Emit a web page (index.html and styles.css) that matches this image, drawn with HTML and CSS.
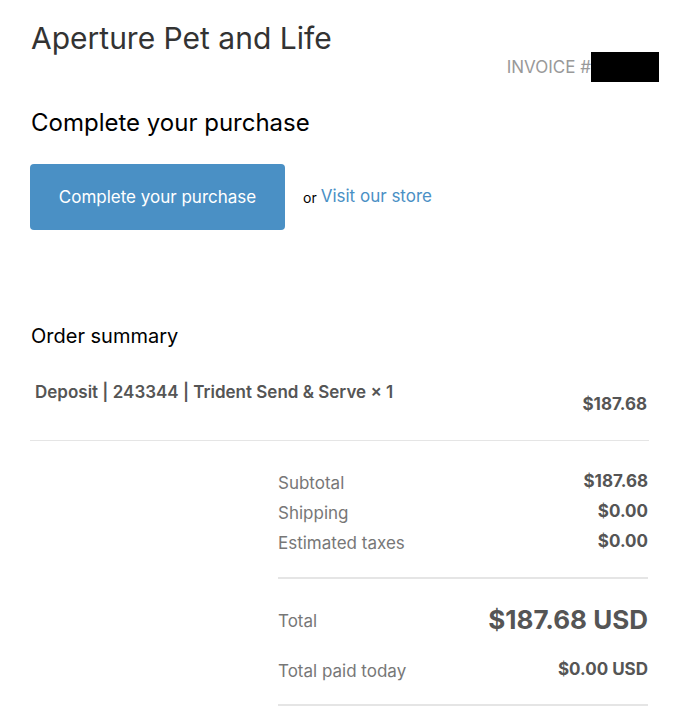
FILE: index.html
```html
<!DOCTYPE html>
<html>
<head>
<meta charset="utf-8">
<link rel="stylesheet" href="styles.css">
</head>
<body>
<div class="page">
  <header class="header">
    <h1 class="shop-name">Aperture Pet and Life</h1>
    <div class="order-number">INVOICE #<span class="redact"></span></div>
  </header>

  <section class="purchase">
    <h2 class="title">Complete your purchase</h2>
    <div class="actions">
      <a class="button">Complete your purchase</a>
      <span class="or">or</span>
      <a class="link">Visit our store</a>
    </div>
  </section>

  <section class="summary">
    <h3 class="summary-title">Order summary</h3>
    <div class="line-item">
      <span class="item-name">Deposit | 243344 | Trident Send &amp; Serve × 1</span>
      <span class="item-price">$187.68</span>
    </div>
    <div class="totals">
      <div class="sub-rows">
        <div class="row"><span class="label">Subtotal</span><span class="value">$187.68</span></div>
        <div class="row"><span class="label">Shipping</span><span class="value">$0.00</span></div>
        <div class="row"><span class="label">Estimated taxes</span><span class="value">$0.00</span></div>
      </div>
      <div class="grand-rows">
        <div class="row total"><span class="label">Total</span><span class="value big">$187.68 USD</span></div>
        <div class="row paid"><span class="label">Total paid today</span><span class="value">$0.00 USD</span></div>
      </div>
    </div>
  </section>
</div>
</body>
</html>
```

FILE: styles.css
```css
* { box-sizing: border-box; }
body {
  margin: 0;
  background: #fff;
  font-family: Inter, "Liberation Sans", sans-serif;
  color: #333;
}
.page {
  width: 649px;
  padding: 0 0 0 30px;
}
.header {
  display: flex;
  justify-content: space-between;
  align-items: flex-start;
  padding-top: 18px;
  margin-right: -10px;
}
.shop-name {
  margin: 0 0 0 1px;
  font-size: 30px;
  font-weight: 400;
  color: #333;
  line-height: 40px;
}
.order-number {
  margin-top: 34px;
  font-size: 17px;
  color: #999;
  display: flex;
  align-items: center;
}
.redact {
  display: inline-block;
  width: 68px;
  height: 30px;
  background: #000;
}
.purchase { margin-top: 26px; }
.title {
  margin: 0 0 0 1px;
  font-size: 24px;
  font-weight: 400;
  color: #000;
  line-height: 30px;
}
.actions {
  display: flex;
  align-items: center;
  margin-top: 26px;
}
.button {
  display: flex;
  align-items: center;
  justify-content: center;
  width: 255px;
  height: 66px;
  background: #4a90c5;
  border-radius: 4px;
  color: #fff;
  font-size: 17px;
}
.or {
  margin-left: 18px;
  font-size: 14px;
  color: #000;
}
.link {
  margin-left: 4px;
  font-size: 17px;
  color: #4a90c5;
  margin-top: -2px;
}
.summary { margin-top: 93px; }
.summary-title {
  margin: 0 0 0 1px;
  font-size: 20px;
  font-weight: 400;
  color: #000;
  line-height: 26px;
}
.line-item {
  display: flex;
  justify-content: space-between;
  padding: 33px 2px 26px 5px;
  border-bottom: 1px solid #e5e5e5;
  font-size: 17px;
  font-weight: 600;
  color: #555;
}
.item-price { margin-top: 12px; font-weight: 700; }
.totals {
  margin-left: 248px;
  margin-right: 1px;
  padding-top: 27px;
}
.sub-rows {
  padding-bottom: 19px;
  border-bottom: 2px solid #e5e5e5;
}
.row {
  display: flex;
  justify-content: space-between;
  align-items: center;
  height: 30px;
  font-size: 17px;
}
.row .value { margin-top: -4px; }
.label { color: #777; }
.value { color: #555; font-weight: 700; }
.grand-rows {
  padding-top: 17px;
  padding-bottom: 8px;
  border-bottom: 2px solid #e5e5e5;
}
.row.total { height: 50px; }
.big { font-size: 26px; }
.row.paid { height: 50px; }
```
